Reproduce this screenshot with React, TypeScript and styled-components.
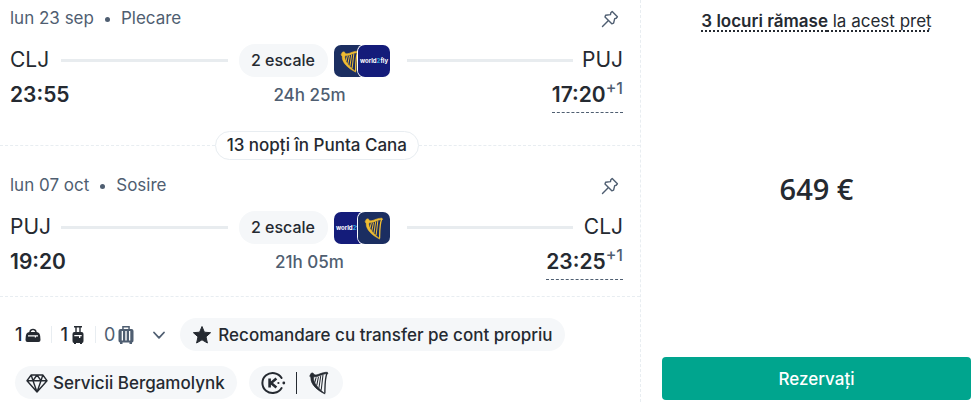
import React from "react";
import styled, { createGlobalStyle } from "styled-components";

const GlobalStyle = createGlobalStyle`
  *, *::before, *::after { box-sizing: border-box; }
  body {
    margin: 0;
    background: #fff;
    color: #252a31;
    font: 500 17px/24px Inter, "Liberation Sans", sans-serif;
  }
  button { font: inherit; color: inherit; border: 0; padding: 0; background: none; cursor: pointer; }
`;

const Card = styled.main`
  display: grid;
  grid-template-columns: minmax(0, 641fr) minmax(0, 339fr);
  min-height: 100vh;
`;

const Itinerary = styled.section`
  border-right: 1px dashed #e8edf1;
`;

const Leg = styled.article`
  padding: 6px 17px 0 10px;
`;

const LegHeader = styled.header`
  display: flex;
  justify-content: space-between;
  align-items: center;
  height: 24px;
  color: #4f5e71;
  font-weight: 400;
`;

const LegDate = styled.div`
  display: flex;
  align-items: center;
  gap: 11px;
`;

const Dot = styled.span`
  width: 5px;
  height: 5px;
  margin-top: 3px;
  border-radius: 50%;
  background: #4f5e71;
`;

const PinButton = styled.button`
  display: flex;
  margin-right: 4px;
  padding-top: 2px;
  color: #4f5e71;
`;

const Route = styled.div`
  display: flex;
  align-items: center;
  margin-top: 14px;
`;

const Code = styled.span<{ $end?: boolean }>`
  width: 40px;
  font-size: 21px;
  font-weight: 400;
  line-height: 28px;
  margin-bottom: 2px;
  display: flex;
  justify-content: ${(p) => (p.$end ? "flex-end" : "flex-start")};
`;

const Track = styled.span<{ $end?: boolean }>`
  flex: 1;
  height: 3px;
  background: #e8ecef;
  margin: ${(p) => (p.$end ? "0 10px 0 17px" : "0 11px")};
`;

const Stops = styled.span`
  min-width: 89px;
  padding: 0 10px;
  border-radius: 16px;
  background: #f5f7f9;
  line-height: 33px;
  font-size: 16px;
  text-align: center;
`;

const Carriers = styled.span`
  display: flex;
  margin-left: 6px;
  svg { display: block; border-radius: 7px; }
  svg + svg { margin-left: -8px; box-shadow: 0 0 0 1px #fff; }
`;

const Times = styled.div`
  display: grid;
  grid-template-columns: 1fr auto 1fr;
  align-items: start;
`;

const Time = styled.time`
  font-size: 21px;
  font-weight: 600;
  line-height: 28px;
  padding-top: 4px;
`;

const Duration = styled.span`
  padding: 6px 14px 0 0;
  color: #4f5e71;
  font-size: 17px;
`;

const Arrival = styled.div`
  justify-self: end;
  display: flex;
  height: 36px;
  border-bottom: 1px dashed #4f5e71;
`;

const DayShift = styled.sup`
  color: #4f5e71;
  font-size: 16px;
  line-height: 22px;
`;

const Nights = styled.div`
  display: flex;
  align-items: center;
  margin-top: 18px;
  margin-bottom: 7px;
  &::before, &::after {
    content: "";
    flex: 1;
    border-top: 1px dashed #e8edf1;
  }
  &::after { flex-grow: 1.03; }
`;

const NightsLabel = styled.span`
  padding: 0 11px;
  border: 1px solid #e8edf1;
  border-radius: 15px;
  line-height: 27px;
`;

const Extras = styled.footer`
  margin-top: 16px;
  padding: 21px 15px 0 15px;
  border-top: 1px dashed #e8edf1;
  display: flex;
  flex-direction: column;
  gap: 15px;
`;

const ExtrasRow = styled.div`
  display: flex;
  align-items: center;
  gap: 12px;
`;

const BagButton = styled.button`
  display: flex;
  align-items: center;
`;

const Bag = styled.span<{ $muted?: boolean }>`
  display: flex;
  align-items: center;
  gap: 3px;
  height: 17px;
  font-size: 18px;
  font-weight: ${(p) => (p.$muted ? 400 : 500)};
  color: ${(p) => (p.$muted ? "#4f5e71" : "#252a31")};
  & + & { margin-left: 10px; padding-left: 8px; border-left: 1px solid #e8edf1; }
  & + svg { margin-left: 16px; }
`;

const Badge = styled.span`
  display: flex;
  align-items: center;
  gap: 5px;
  height: 33px;
  padding: 0 12px 0 11px;
  border-radius: 17px;
  background: #f5f7f9;
`;

const Separator = styled.span`
  width: 1px;
  height: 22px;
  margin: 0 5px;
  background: #252a31;
`;

const Offer = styled.aside`
  display: flex;
  flex-direction: column;
  align-items: center;
  justify-content: space-between;
  padding: 9px 9px 2px 21px;
`;

const SeatsLeft = styled.span`
  color: #252a31;
  font-weight: 400;
  text-decoration: underline dotted 2px;
  text-underline-offset: 3px;
  text-decoration-skip-ink: none;
  strong { font-weight: 600; }
`;

const Price = styled.strong`
  font-family: "Open Sans", "Noto Sans", sans-serif;
  font-size: 29px;
  font-weight: 600;
  line-height: 36px;
  margin-bottom: 12px;
`;

const BookButton = styled.button`
  width: 100%;
  height: 43px;
  border-radius: 4px;
  background: #00a58e;
  color: #fff;
`;

const Pin = () => (
  <svg width="18" height="18" viewBox="0 0 18 18" fill="none" stroke="currentColor" strokeWidth="1.4" strokeLinejoin="round" strokeLinecap="round" aria-hidden="true">
    <path d="M11.2 1.5 L16.4 6.8 L15.2 8.2 L13.7 8.6 L12.6 13.2 L10.8 13.8 L4 7 L4.6 5.3 L9.5 4.6 L9.8 2.8Z M7.2 10.7 L1.5 16.5" />
  </svg>
);

const Harp = ({ color }: { color: string }) => (
  <g fill="none" stroke={color} strokeLinecap="round" strokeLinejoin="round">
    <path fill={color} strokeWidth=".6" d="M7.2 9.6 L8.4 7.2 L10.2 6.8 L11.3 8.4 C14.4 10 18 6 24 6.2 L24.6 7.4 C19 7.6 15 11.2 11 10.5 C9.8 16.2 14.8 20.7 21.8 27 C14.5 23.7 7.8 17.8 8.2 11.6Z" />
    <path strokeWidth="1.3" d="M23.6 7.4 C21.6 12 21.8 19 21.6 26" />
    <path strokeWidth="1" d="M13.2 11.4 L12 16 M15.4 11 L13.9 18.6 M17.6 10 L16 20.8 M19.8 9 L18.2 22.6" />
  </g>
);

const Ryanair = () => (
  <svg width="32" height="32" viewBox="0 0 32 32" role="img" aria-label="Ryanair">
    <rect width="32" height="32" fill="#1b2e61" />
    <Harp color="#f0bd31" />
  </svg>
);

const World2Fly = () => (
  <svg width="32" height="32" viewBox="0 0 32 32" role="img" aria-label="World2Fly">
    <rect width="32" height="32" fill="#141c7a" />
    <text x="16" y="18" textAnchor="middle" fontFamily="Inter, sans-serif" fontSize="6" fontWeight="700" fill="#fff">
      world<tspan fill="#29a5dc">2</tspan>fly
    </text>
  </svg>
);

const PersonalBag = () => (
  <svg width="16" height="16" viewBox="0 0 16 16" fill="currentColor" aria-hidden="true">
    <path fillRule="evenodd" d="M4.3 5 C4.3 .8 11.7 .8 11.7 5 C14 5.1 14.8 7 15.2 9 L15.5 13 Q15.5 15 13.5 15 H2.5 Q.5 15 .5 13 L.8 9 C1.2 7 2 5.1 4.3 5Z M5.8 5 H10.2 C9.8 2.8 6.2 2.8 5.8 5Z M3 8.3 V9.4 H9.8 V10.6 H11 V9.4 H13 V8.3Z" />
  </svg>
);

const CabinBag = () => (
  <svg width="14" height="18" viewBox="0 0 14 18" fill="currentColor" aria-hidden="true">
    <path fillRule="evenodd" d="M3 0 H11 V1.5 H9.7 V6 H10.5 Q12.5 6 12.5 8 V15 Q12.5 17 11 17 V18 H9 V17 H5 V18 H3 V17 Q1.5 17 1.5 15 V8 Q1.5 6 3.5 6 H4.3 V1.5 H3Z M5.7 1.5 V6 H8.3 V1.5Z M3.3 9 V10.2 H8 V12 H9.3 V10.2 H10.7 V9Z" />
  </svg>
);

const HoldBag = () => (
  <svg width="16" height="18" viewBox="0 0 16 18" fill="currentColor" aria-hidden="true">
    <path fillRule="evenodd" d="M4.2 0 H11.8 V3 H13.5 Q15.5 3 15.5 5 V14.5 Q15.5 16.3 14 16.5 V18 H11.5 V16.5 H4.5 V18 H2 V16.5 Q.5 16.3 .5 14.5 V5 Q.5 3 2.5 3 H4.2Z M5.7 1.4 V3 H10.3 V1.4Z M3.7 5 V14.5 H5 V5Z M7.3 5 V14.5 H8.7 V5Z M11 5 V14.5 H12.3 V5Z" />
  </svg>
);

const Chevron = () => (
  <svg width="18" height="18" viewBox="0 0 18 18" fill="none" stroke="#4f5e71" strokeWidth="1.8" strokeLinecap="round" strokeLinejoin="round" aria-hidden="true">
    <path d="M4 6.5 L9 11.8 L14 6.5" />
  </svg>
);

const Star = () => (
  <svg width="22" height="22" viewBox="0 0 22 22" fill="#252a31" aria-hidden="true">
    <path stroke="#252a31" strokeLinejoin="round" d="M11 2.5 L13.4 8.2 L19.6 8.7 L15 12.8 L16.4 19 L11 15.8 L5.6 19 L7 12.8 L2.4 8.7 L8.6 8.2Z" />
  </svg>
);

const Diamond = () => (
  <svg width="22" height="22" viewBox="0 0 22 22" fill="none" stroke="#252a31" strokeWidth="1.4" strokeLinejoin="round" aria-hidden="true">
    <path d="M5.2 3 H16.8 L21 8.7 L11 20 L1 8.7Z M1 8.7 H21 M5.2 3 L7 8.7 L11 20 L15 8.7 L16.8 3 M7 8.7 L11 3 L15 8.7" />
  </svg>
);

const Kiwi = () => (
  <svg width="26" height="24" viewBox="0 0 26 24" fill="none" stroke="#252a31" strokeWidth="2" strokeLinecap="round" aria-label="Kiwi.com" role="img">
    <path d="M21.6 7 A10.3 10 0 1 0 21.6 17" />
    <path strokeWidth="2.6" strokeLinecap="butt" d="M9.6 7.6 V16.4 M16.4 7.6 L11 12 L16.4 16.4" />
    <circle cx="18.4" cy="12" r="1.1" fill="#252a31" stroke="none" />
    <circle cx="23.8" cy="12" r="1.4" fill="#252a31" stroke="none" />
  </svg>
);

const DarkHarp = () => (
  <svg width="24" height="24" viewBox="5 5 22 23" role="img" aria-label="Ryanair">
    <Harp color="#252a31" />
  </svg>
);

type LegProps = {
  date: string;
  kind: string;
  from: string;
  to: string;
  departs: string;
  arrives: string;
  duration: string;
  children: React.ReactNode;
};

const FlightLeg = ({ date, kind, from, to, departs, arrives, duration, children }: LegProps) => (
  <Leg>
    <LegHeader>
      <LegDate>
        <span>{date}</span>
        <Dot />
        <span>{kind}</span>
      </LegDate>
      <PinButton type="button" aria-label="Fixează">
        <Pin />
      </PinButton>
    </LegHeader>
    <Route>
      <Code>{from}</Code>
      <Track />
      <Stops>2 escale</Stops>
      <Carriers>{children}</Carriers>
      <Track $end />
      <Code $end>{to}</Code>
    </Route>
    <Times>
      <Time>{departs}</Time>
      <Duration>{duration}</Duration>
      <Arrival>
        <Time>{arrives}</Time>
        <DayShift>+1</DayShift>
      </Arrival>
    </Times>
  </Leg>
);

export default function App() {
  return (
    <>
      <GlobalStyle />
      <Card>
        <Itinerary>
          <FlightLeg date="lun 23 sep" kind="Plecare" from="CLJ" to="PUJ" departs="23:55" arrives="17:20" duration="24h 25m">
            <Ryanair />
            <World2Fly />
          </FlightLeg>
          <Nights>
            <NightsLabel>13 nopți în Punta Cana</NightsLabel>
          </Nights>
          <FlightLeg date="lun 07 oct" kind="Sosire" from="PUJ" to="CLJ" departs="19:20" arrives="23:25" duration="21h 05m">
            <World2Fly />
            <Ryanair />
          </FlightLeg>
          <Extras>
            <ExtrasRow>
              <BagButton type="button" aria-label="Bagaje">
                <Bag>1<PersonalBag /></Bag>
                <Bag>1<CabinBag /></Bag>
                <Bag $muted>0<HoldBag /></Bag>
                <Chevron />
              </BagButton>
              <Badge>
                <Star />
                Recomandare cu transfer pe cont propriu
              </Badge>
            </ExtrasRow>
            <ExtrasRow>
              <Badge>
                <Diamond />
                Servicii Bergamolynk
              </Badge>
              <Badge>
                <Kiwi />
                <Separator />
                <DarkHarp />
              </Badge>
            </ExtrasRow>
          </Extras>
        </Itinerary>
        <Offer>
          <SeatsLeft>
            <strong>3 locuri rămase</strong> la acest preț
          </SeatsLeft>
          <Price>649 €</Price>
          <BookButton type="button">Rezervați</BookButton>
        </Offer>
      </Card>
    </>
  );
}
